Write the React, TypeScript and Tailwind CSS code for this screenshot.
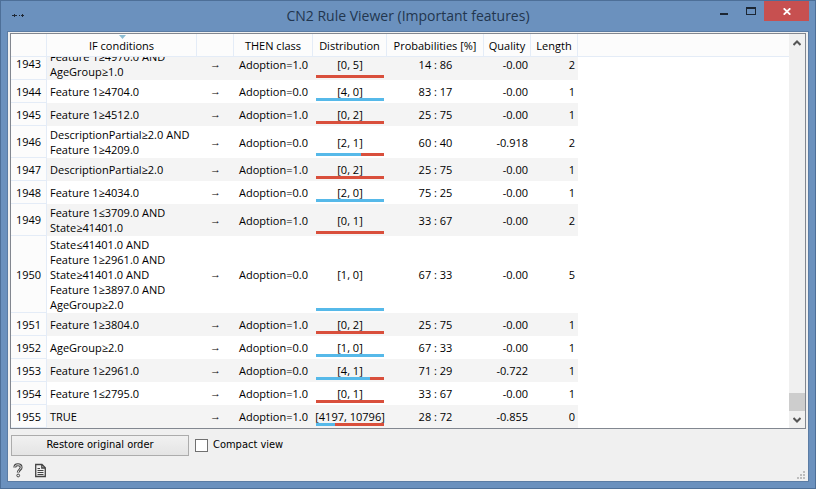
import { useLayoutEffect, useRef } from "react";

type Rule = {
  id: number;
  conditions: string[];
  target: string;
  counts: [number, number];
  probabilities: string;
  quality: string;
  length: number;
};

const rules: Rule[] = [
  { id: 1943, conditions: ["Feature 1≥4970.0", "AgeGroup≥1.0"], target: "1.0", counts: [0, 5], probabilities: "14 : 86", quality: "-0.00", length: 2 },
  { id: 1944, conditions: ["Feature 1≥4704.0"], target: "0.0", counts: [4, 0], probabilities: "83 : 17", quality: "-0.00", length: 1 },
  { id: 1945, conditions: ["Feature 1≥4512.0"], target: "1.0", counts: [0, 2], probabilities: "25 : 75", quality: "-0.00", length: 1 },
  { id: 1946, conditions: ["DescriptionPartial≥2.0", "Feature 1≥4209.0"], target: "0.0", counts: [2, 1], probabilities: "60 : 40", quality: "-0.918", length: 2 },
  { id: 1947, conditions: ["DescriptionPartial≥2.0"], target: "1.0", counts: [0, 2], probabilities: "25 : 75", quality: "-0.00", length: 1 },
  { id: 1948, conditions: ["Feature 1≥4034.0"], target: "0.0", counts: [2, 0], probabilities: "75 : 25", quality: "-0.00", length: 1 },
  { id: 1949, conditions: ["Feature 1≤3709.0", "State≥41401.0"], target: "1.0", counts: [0, 1], probabilities: "33 : 67", quality: "-0.00", length: 2 },
  { id: 1950, conditions: ["State≤41401.0", "Feature 1≥2961.0", "State≥41401.0", "Feature 1≥3897.0", "AgeGroup≥2.0"], target: "0.0", counts: [1, 0], probabilities: "67 : 33", quality: "-0.00", length: 5 },
  { id: 1951, conditions: ["Feature 1≥3804.0"], target: "1.0", counts: [0, 2], probabilities: "25 : 75", quality: "-0.00", length: 1 },
  { id: 1952, conditions: ["AgeGroup≥2.0"], target: "0.0", counts: [1, 0], probabilities: "67 : 33", quality: "-0.00", length: 1 },
  { id: 1953, conditions: ["Feature 1≥2961.0"], target: "0.0", counts: [4, 1], probabilities: "71 : 29", quality: "-0.722", length: 1 },
  { id: 1954, conditions: ["Feature 1≤2795.0"], target: "1.0", counts: [0, 1], probabilities: "33 : 67", quality: "-0.00", length: 1 },
  { id: 1955, conditions: ["TRUE"], target: "1.0", counts: [4197, 10796], probabilities: "28 : 72", quality: "-0.855", length: 0 },
];

const headCell = "h-[23px] border-r border-b border-[#e4ecf7] bg-[#fcfcfc] p-0 font-normal";

function TitleBar() {
  return (
    <header className="flex h-[30px] shrink-0 items-start">
      <div className="flex h-7 w-[130px] items-center pl-[11px]">
        <svg width="12" height="3" viewBox="0 0 12 3" fill="#1f2937" aria-hidden="true">
          <path d="M0 1h2v1H0zM2 0h1v3H2zM3 1h2v1H3zM7 1h1v1H7zM9 1h1v1H9zM10 0h1v3h-1zM11 1h1v1h-1z" />
        </svg>
      </div>
      <h1 className="flex-1 pt-[3px] text-center text-[14px] leading-[24px] text-[#22364f]">
        CN2 Rule Viewer (Important features)
      </h1>
      <div className="flex h-5 w-[130px] justify-end pr-[6px]">
        <button aria-label="Minimize" className="flex w-[27px] items-center justify-center">
          <svg width="8" height="12" viewBox="0 0 8 12"><path d="M0 8h8v2H0z" fill="#1c2633" /></svg>
        </button>
        <button aria-label="Maximize" className="flex w-[27px] items-center justify-center">
          <svg width="10" height="8" viewBox="0 0 10 8"><path d="M0 0h10v8H0zM1 2v5h8V2z" fill="#1c2633" fillRule="evenodd" /></svg>
        </button>
        <button aria-label="Close" className="flex w-[45px] items-center justify-center bg-[#c75050]">
          <svg width="8" height="7" viewBox="0 0 8 7"><path d="M.7 .3 7.3 6.7M7.3 .3 .7 6.7" stroke="#fff" strokeWidth="1.8" /></svg>
        </button>
      </div>
    </header>
  );
}

function Distribution({ counts }: { counts: [number, number] }) {
  const share = (100 * counts[0]) / (counts[0] + counts[1]);
  return (
    <td className="relative p-0 text-center group-odd:bg-[#f4f4f4]">
      [{counts[0]}, {counts[1]}]
      <div className="absolute inset-x-[3px] bottom-[2px] flex h-[3px] bg-[#d94f3c]">
        <div className="bg-[#56b9e9]" style={{ width: `${share}%` }} />
      </div>
    </td>
  );
}

function RuleTable() {
  const scroller = useRef<HTMLDivElement>(null);
  useLayoutEffect(() => {
    if (scroller.current) scroller.current.scrollTop = scroller.current.scrollHeight;
  }, []);

  return (
    <div className="flex min-h-0 flex-1 border border-[#828790] bg-white">
      <div ref={scroller} className="min-w-0 flex-1 overflow-y-scroll [scrollbar-width:none]">
        <table className="w-full table-fixed border-separate border-spacing-0 text-[11px] leading-[15px] whitespace-nowrap">
          <colgroup>
            <col className="w-[36px]" />
            <col className="w-[150px]" />
            <col className="w-[37px]" />
            <col className="w-[79px]" />
            <col className="w-[74px]" />
            <col className="w-[97px]" />
            <col className="w-[47px]" />
            <col className="w-[47px]" />
            <col />
          </colgroup>
          <thead className="sticky top-0 z-10">
            <tr>
              <th className={headCell} />
              <th className={headCell}>
                <div className="relative">
                  IF conditions
                  <svg className="absolute -top-[3px] left-[72px]" width="7" height="4" viewBox="0 0 7 4" aria-hidden="true">
                    <path d="M0 0h7L3.5 4z" fill="#8cbdd3" />
                  </svg>
                </div>
              </th>
              <th className={headCell} />
              <th className={headCell}>THEN class</th>
              <th className={headCell}>Distribution</th>
              <th className={headCell}>Probabilities [%]</th>
              <th className={headCell}>Quality</th>
              <th className={headCell}>Length</th>
              <th className="border-b border-[#e4ecf7] bg-[#fcfcfc] p-0" />
            </tr>
          </thead>
          <tbody>
            {rules.map((rule) => (
              <tr key={rule.id} className="group h-[23px]">
                <th className="border-r border-b border-[#e4ecf7] bg-[#fcfcfc] p-0 font-normal">{rule.id}</th>
                <td className="py-px pr-0 pl-[3px] group-odd:bg-[#f4f4f4]">
                  {rule.conditions.map((condition, i) => (
                    <div key={condition}>
                      {condition}
                      {i < rule.conditions.length - 1 && " AND"}
                    </div>
                  ))}
                </td>
                <td className="p-0 text-center font-['Liberation_Sans',sans-serif] group-odd:bg-[#f4f4f4]">→</td>
                <td className="p-0 text-center group-odd:bg-[#f4f4f4]">Adoption={rule.target}</td>
                <Distribution counts={rule.counts} />
                <td className="p-0 text-center group-odd:bg-[#f4f4f4]">{rule.probabilities}</td>
                <td className="p-0 pr-[3px] text-right group-odd:bg-[#f4f4f4]">{rule.quality}</td>
                <td className="p-0 pr-[3px] text-right group-odd:bg-[#f4f4f4]">{rule.length}</td>
                <td className="p-0" />
              </tr>
            ))}
          </tbody>
        </table>
      </div>
      <div className="flex w-4 shrink-0 flex-col items-center bg-[#f0f0f0]">
        <button aria-label="Scroll up" className="flex h-[18px] w-full items-center justify-center">
          <svg width="8" height="6" viewBox="0 0 8 6"><path d="M.5 5 4 1.5 7.5 5" fill="none" stroke="#555" strokeWidth="2" /></svg>
        </button>
        <div className="flex-1" />
        <div className="h-[18px] w-full bg-[#cdcdcd]" />
        <button aria-label="Scroll down" className="flex h-[17px] w-full items-center justify-center">
          <svg width="8" height="6" viewBox="0 0 8 6"><path d="M.5 1 4 4.5 7.5 1" fill="none" stroke="#555" strokeWidth="2" /></svg>
        </button>
      </div>
    </div>
  );
}

export default function App() {
  return (
    <div className="flex h-screen flex-col border border-[#4d6f98] bg-[#6b91be] pb-[6px] font-['Open_Sans',sans-serif] text-black">
      <TitleBar />
      <main className="mx-[6px] flex min-h-0 flex-1 flex-col border border-[#5b7ca4] bg-[#f0f0f0] px-[2px] pt-px">
        <RuleTable />
        <div className="flex h-[31px] shrink-0 items-center gap-[6px] pt-px font-['DejaVu_Sans_Condensed','DejaVu_Sans',sans-serif] text-[11px]">
          <button className="ml-px h-[21px] w-[178px] border border-[#acacac] bg-linear-to-b from-[#f1f1f1] to-[#e4e4e4] leading-[18px]">
            Restore original order
          </button>
          <label className="flex items-center gap-[5px]">
            <input type="checkbox" className="size-[13px] appearance-none border border-[#707070] bg-white" />
            Compact view
          </label>
        </div>
        <footer className="flex h-[21px] shrink-0 items-start gap-3 pt-[3px] pl-[3px]">
          <button aria-label="Help" className="h-[15px] w-[10px]">
            <svg width="10" height="15" viewBox="0 0 10 15" fill="none">
              <path d="M1.8 4.6C1.8 2.7 3 1.8 4.9 1.8c2 0 3.2 1 3.2 2.7C8.1 6.7 5.2 6.8 5.2 9.6" stroke="#444" strokeWidth="2.9" />
              <path d="M1.8 4.3C1.8 2.7 3 1.8 4.9 1.8c2 0 3.2 1 3.2 2.7C8.1 6.7 5.2 6.8 5.2 9.2" stroke="#eee" strokeWidth="1" />
              <circle cx="5.2" cy="12.5" r="1.4" stroke="#444" fill="#eee" />
            </svg>
          </button>
          <button aria-label="Report" className="h-[15px] w-[11px]">
            <svg width="11" height="15" viewBox="0 0 11 15" fill="none" stroke="#444">
              <path d="M.7 1.5h6.3l3.3 3.3v8.7H.7zM6.8 1.5v3.5h3.5" strokeWidth="1.3" />
              <path d="M2.5 5.5h2.5M2.5 7.5h6M2.5 9.5h6M2.5 11.5h6" />
            </svg>
          </button>
          <div className="flex-1" />
          <svg className="mt-2 mr-px" width="8" height="8" viewBox="0 0 8 8" fill="#bdbdbd" aria-hidden="true">
            <path d="M6 0h2v2H6zM3 3h2v2H3zM6 3h2v2H6zM0 6h2v2H0zM3 6h2v2H3zM6 6h2v2H6z" />
          </svg>
        </footer>
      </main>
    </div>
  );
}
